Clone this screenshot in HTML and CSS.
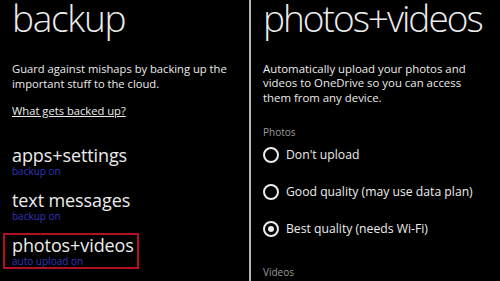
FILE: index.html
```html
<!DOCTYPE html>
<html>
<head>
    <meta charset="utf-8">
    <title>Backup settings</title>
    <link rel="stylesheet" href="styles.css">
</head>
<body>
    <div class="phones">
        <div class="screen">
            <h1 class="title">backup</h1>
            <p class="desc">Guard against mishaps by backing up the important stuff to the cloud.</p>
            <a class="link" href="#">What gets backed up?</a>
            <div class="items">
                <div class="item">
                    <div class="item-name">apps+settings</div>
                    <div class="item-state">backup on</div>
                </div>
                <div class="item">
                    <div class="item-name">text messages</div>
                    <div class="item-state">backup on</div>
                </div>
                <div class="item selected">
                    <div class="item-name">photos+videos</div>
                    <div class="item-state">auto upload on</div>
                </div>
            </div>
        </div>

        <div class="divider"></div>

        <div class="screen">
            <h1 class="title tight">photos+videos</h1>
            <p class="desc wide">Automatically upload your photos and videos to OneDrive so you can access them from any device.</p>
            <div class="label">Photos</div>
            <div class="radios">
                <div class="radio"><span class="dot"></span>Don't upload</div>
                <div class="radio"><span class="dot"></span>Good quality (may use data plan)</div>
                <div class="radio checked"><span class="dot"></span>Best quality (needs Wi-Fi)</div>
            </div>
            <div class="label videos">Videos</div>
        </div>
    </div>
</body>
</html>
```

FILE: styles.css
```css
body {
    margin: 0;
    background-color: #000;
    color: #ececec;
    font-family: 'Open Sans', 'DejaVu Sans', sans-serif;
    overflow: hidden;
}

.phones {
    display: flex;
    height: 281px;
}

.screen {
    flex: 1;
    padding: 0 0 0 12px;
    white-space: nowrap;
    overflow: hidden;
}

.divider {
    width: 2px;
    background-color: #b4b4b4;
}

.title {
    margin: 0;
    font-size: 37px;
    font-weight: 300;
    line-height: 36px;
    letter-spacing: -1.3px;
}

.title.tight {
    letter-spacing: -2px;
}

.desc {
    margin: 26px 0 0 0;
    width: 225px;
    white-space: normal;
    font-size: 11.2px;
    line-height: 14.5px;
}

.desc.wide {
    font-size: 11.4px;
    line-height: 14.4px;
}

.link {
    display: inline-block;
    margin-top: 12px;
    color: #ececec;
    font-size: 11.2px;
    line-height: 15px;
}

.items {
    margin-top: 23px;
    display: flex;
    flex-direction: column;
    gap: 9px;
}

.item {
    width: 125px;
    margin-left: -9px;
    padding: 0 0 0 7px;
    border: 2px solid transparent;
}

.item-name {
    font-size: 18px;
    line-height: 20px;
    letter-spacing: -0.1px;
}

.item-state {
    color: #3535bb;
    font-size: 10px;
    line-height: 12px;
}

.selected {
    border-color: #b01020;
}

.label {
    margin-top: 20px;
    color: #9a9a9a;
    font-size: 10px;
    line-height: 14px;
}

.label.videos {
    margin-top: 28px;
}

.radios {
    display: flex;
    flex-direction: column;
    gap: 21px;
    margin-top: 8px;
}

.radio {
    display: flex;
    align-items: center;
    gap: 7px;
    font-size: 12.2px;
    line-height: 16px;
}

.dot {
    width: 12px;
    height: 12px;
    border: 2px solid #ececec;
    border-radius: 50%;
    display: flex;
    align-items: center;
    justify-content: center;
}

.checked .dot::after {
    content: "";
    width: 6px;
    height: 6px;
    border-radius: 50%;
    background-color: #ececec;
}
```
